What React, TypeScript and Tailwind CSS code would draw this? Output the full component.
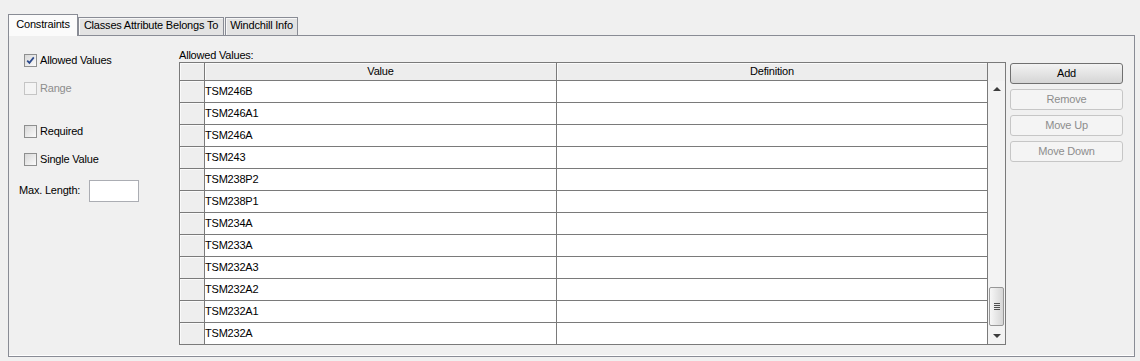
import React from "react";

const rows = [
  "TSM246B",
  "TSM246A1",
  "TSM246A",
  "TSM243",
  "TSM238P2",
  "TSM238P1",
  "TSM234A",
  "TSM233A",
  "TSM232A3",
  "TSM232A2",
  "TSM232A1",
  "TSM232A",
];

function Checkbox({ checked, disabled }: { checked?: boolean; disabled?: boolean }) {
  return (
    <span
      className={
        disabled
          ? "w-[13px] h-[13px] border border-[#c5c5c5] bg-[#f4f4f4] flex items-center justify-center shrink-0"
          : "w-[13px] h-[13px] border border-[#8e8f8f] bg-gradient-to-br from-[#d8d8d8] to-[#fbfbfb] flex items-center justify-center shrink-0"
      }
    >
      {checked && (
        <svg width="9" height="9" viewBox="0 0 9 9">
          <path d="M1.2 4.6 L3.4 6.9 L7.8 1.4" fill="none" stroke="#2c4a8c" strokeWidth="1.7" />
        </svg>
      )}
    </span>
  );
}

function CheckRow({
  label,
  checked,
  disabled,
  className,
}: {
  label: string;
  checked?: boolean;
  disabled?: boolean;
  className: string;
}) {
  return (
    <div className={"flex items-center h-[13px] gap-[3px] " + className}>
      <Checkbox checked={checked} disabled={disabled} />
      <span className={disabled ? "text-[#8d8d8d] -mt-[1px]" : "text-black -mt-[1px]"}>{label}</span>
    </div>
  );
}

function Btn({ label, disabled }: { label: string; disabled?: boolean }) {
  return (
    <div
      className={
        disabled
          ? "h-[21px] rounded-[3px] border border-[#c6c6c6] bg-[#f4f4f4] text-[#8d8d8d] flex items-center justify-center"
          : "h-[21px] rounded-[3px] border border-[#707070] bg-gradient-to-b from-[#f3f3f3] to-[#d5d5d5] text-black flex items-center justify-center"
      }
    >
      {label}
    </div>
  );
}

export default function App() {
  return (
    <div className="w-[1140px] h-[361px] bg-[#f0f0f0] text-[11px] leading-[13px] tracking-[-0.2px] text-black overflow-hidden pt-[14px] pl-[8px] font-['Liberation_Sans',Arial,sans-serif]">
      {/* Tabs */}
      <div className="flex items-end h-[21px]">
        <div className="relative z-10 h-[22px] -mb-px w-[70px] border-x border-t border-[#898c95] bg-[#fbfbfb] flex justify-center pt-[3px]">
          Constraints
        </div>
        <div className="h-[18px] w-[146px] border-x border-t border-[#898c95] bg-[#e3e3e3] shadow-[inset_1px_1px_0_#f7f7f7] flex justify-center pt-[1px]">
          Classes Attribute Belongs To
        </div>
        <div className="ml-[1px] h-[18px] w-[73px] border-x border-t border-[#898c95] bg-[#e3e3e3] shadow-[inset_1px_1px_0_#f7f7f7] flex justify-center pt-[1px]">
          Windchill Info
        </div>
      </div>

      {/* Panel */}
      <div className="w-[1127px] h-[322px] border border-[#898c95] shadow-[inset_0_-1px_0_#ffffff] flex">
        {/* Left column */}
        <div className="w-[170px] flex flex-col pt-[18px] pl-[10px]">
          <CheckRow label="Allowed Values" checked className="ml-[5px]" />
          <CheckRow label="Range" disabled className="ml-[5px] mt-[15px]" />
          <CheckRow label="Required" className="ml-[5px] mt-[30px]" />
          <CheckRow label="Single Value" className="ml-[5px] mt-[15px]" />
          <div className="flex items-center mt-[14px] h-[22px]">
            <span className="w-[70px] -mt-[2px]">Max. Length:</span>
            <div className="w-[50px] h-[22px] border border-[#abadb3] bg-white" />
          </div>
        </div>

        {/* Table column */}
        <div className="w-[827px] flex flex-col pt-[13px]">
          <div className="h-[13px]">Allowed Values:</div>
          <div className="h-[283px] border border-[#7a7a7a] flex">
            {/* grid */}
            <div className="w-[808px] flex flex-col bg-white">
              <div className="flex h-[18px] bg-[#ededed]">
                <div className="w-[25px] border-r border-b border-[#7a7a7a] shadow-[inset_1px_1px_0_#fafafa]" />
                <div className="w-[352px] border-r border-b border-[#7a7a7a] shadow-[inset_1px_1px_0_#fafafa] flex items-center justify-center">
                  Value
                </div>
                <div className="w-[431px] border-r border-b border-[#7a7a7a] shadow-[inset_1px_1px_0_#fafafa] flex items-center justify-center">
                  Definition
                </div>
              </div>
              {rows.map((r, i) => (
                <div key={r} className={i === rows.length - 1 ? "flex h-[21px]" : "flex h-[22px]"}>
                  <div
                    className={
                      i === rows.length - 1
                        ? "w-[25px] border-r border-[#7a7a7a] bg-[#eeeeee] shadow-[inset_1px_1px_0_#fafafa]"
                        : "w-[25px] border-r border-b border-[#7a7a7a] bg-[#eeeeee] shadow-[inset_1px_1px_0_#fafafa]"
                    }
                  />
                  <div
                    className={
                      i === rows.length - 1
                        ? "w-[352px] border-r border-[#7a7a7a] flex items-center"
                        : "w-[352px] border-r border-b border-[#7a7a7a] flex items-center"
                    }
                  >
                    {r}
                  </div>
                  <div
                    className={
                      i === rows.length - 1
                        ? "w-[431px] border-r border-[#7a7a7a]"
                        : "w-[431px] border-r border-b border-[#7a7a7a]"
                    }
                  />
                </div>
              ))}
            </div>
            {/* scrollbar */}
            <div className="w-[17px] flex flex-col">
              <div className="h-[18px] bg-[#f0f0f0]" />
              <div className="flex-1 bg-[#f3f3f3] flex flex-col">
                <div className="h-[17px] flex items-center justify-center">
                  <div className="w-0 h-0 border-x-[4px] border-x-transparent border-b-[4px] border-b-[#3c3c3c] -mt-[1px]" />
                </div>
                <div className="flex-1" />
                <div className="mx-[1px] h-[39px] rounded-[2px] border border-[#979797] bg-gradient-to-r from-[#f7f7f7] to-[#d6d6d6] flex flex-col items-center justify-center gap-[1px]">
                  <div className="w-[6px] h-px bg-[#4f4f4f]" />
                  <div className="w-[6px] h-px bg-[#4f4f4f]" />
                  <div className="w-[6px] h-px bg-[#4f4f4f]" />
                  <div className="w-[6px] h-px bg-[#4f4f4f]" />
                </div>
                <div className="h-[17px] flex items-center justify-center mt-[1px]">
                  <div className="w-0 h-0 border-x-[4px] border-x-transparent border-t-[4px] border-t-[#3c3c3c]" />
                </div>
              </div>
            </div>
          </div>
        </div>

        {/* Buttons */}
        <div className="ml-[4px] w-[113px] flex flex-col gap-[5px] pt-[27px]">
          <Btn label="Add" />
          <Btn label="Remove" disabled />
          <Btn label="Move Up" disabled />
          <Btn label="Move Down" disabled />
        </div>
      </div>
    </div>
  );
}
